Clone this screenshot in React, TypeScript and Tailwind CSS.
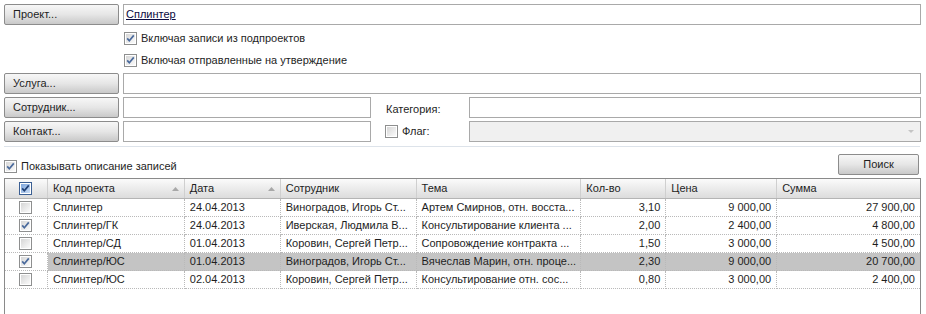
import React from "react";

const font = { fontFamily: '"Liberation Sans", Arial, sans-serif' };

function Check({ checked, head }: { checked?: boolean; head?: boolean }) {
  return (
    <svg width="13" height="13" viewBox="0 0 13 13" className="shrink-0">
      <defs>
        <linearGradient id="cbg" x1="0" y1="0" x2="1" y2="1">
          <stop offset="0" stopColor="#d6d6d6" />
          <stop offset="1" stopColor="#fbfbfb" />
        </linearGradient>
        <linearGradient id="cbh" x1="0" y1="0" x2="1" y2="1">
          <stop offset="0" stopColor="#7ea6dc" />
          <stop offset="1" stopColor="#c9dcf5" />
        </linearGradient>
      </defs>
      <rect x="0.5" y="0.5" width="12" height="12" fill="#fff" stroke={head ? "#3b5f93" : "#8e8f8f"} />
      <rect x="2" y="2" width="9" height="9" fill={head ? "url(#cbh)" : "url(#cbg)"} />
      {checked && (
        <path d="M3.2 6.4 L5.3 8.8 L9.8 3.4" fill="none" stroke={head ? "#1f3f73" : "#4a6a9c"} strokeWidth="1.7" />
      )}
    </svg>
  );
}

function Btn({ label, w = "w-[115px]", center }: { label: string; w?: string; center?: boolean }) {
  return (
    <div
      className={`${w} h-[21px] shrink-0 border border-[#8c8c8c] rounded-[2px] bg-gradient-to-b from-[#f7f7f7] via-[#e6e6e6] to-[#c9c9c9] flex items-center text-[11px] text-[#1e1e1e] ${
        center ? "justify-center" : "pl-[8px]"
      }`}
    >
      {label}
    </div>
  );
}

function Input({ w, children, disabled }: { w: string; children?: React.ReactNode; disabled?: boolean }) {
  return (
    <div
      className={`${w} h-[21px] border border-[#a9a9a9] flex items-center px-[2px] text-[11px] ${
        disabled ? "bg-[#f0f0f0] justify-end" : "bg-white"
      }`}
    >
      {children}
    </div>
  );
}

const cols = [43, 137, 96, 136, 165, 85, 111, 143];

const rows = [
  ["Сплинтер", "24.04.2013", "Виноградов, Игорь Ст...", "Артем Смирнов, отн. восста...", "3,10", "9 000,00", "27 900,00", false, false],
  ["Сплинтер/ГК", "24.04.2013", "Иверская, Людмила В...", "Консультирование клиента ...", "2,00", "2 400,00", "4 800,00", true, false],
  ["Сплинтер/СД", "01.04.2013", "Коровин, Сергей Петр...", "Сопровождение контракта  ...", "1,50", "3 000,00", "4 500,00", false, false],
  ["Сплинтер/ЮС", "01.04.2013", "Виноградов, Игорь Ст...", "Вячеслав Марин, отн. проце...", "2,30", "9 000,00", "20 700,00", true, true],
  ["Сплинтер/ЮС", "02.04.2013", "Коровин, Сергей Петр...", "Консультирование отн. сос...", "0,80", "3 000,00", "2 400,00", false, false],
] as const;

function SortArrow() {
  return (
    <svg width="7" height="4" viewBox="0 0 7 4" className="ml-auto mr-[5px]">
      <path d="M0 4 L3.5 0 L7 4 Z" fill="#a8a8a8" />
    </svg>
  );
}

export default function App() {
  const heads = ["Код проекта", "Дата", "Сотрудник", "Тема", "Кол-во", "Цена", "Сумма"];
  return (
    <div style={font} className="w-[926px] h-[314px] bg-white overflow-hidden text-[11px] text-[#1e1e1e] pl-[4px] pt-[4px]">
      <div className="flex gap-[4px]">
        <Btn label="Проект..." />
        <Input w="w-[798px]">
          <span className="underline text-[#0a0a40]">Сплинтер</span>
        </Input>
      </div>
      <div className="pl-[120px] mt-[7px] flex items-center gap-[4px] h-[13px]">
        <Check checked /> <span>Включая записи из подпроектов</span>
      </div>
      <div className="pl-[120px] mt-[9px] flex items-center gap-[4px] h-[13px]">
        <Check checked /> <span>Включая отправленные на утверждение</span>
      </div>
      <div className="flex gap-[4px] mt-[6px]">
        <Btn label="Услуга..." />
        <Input w="w-[798px]" />
      </div>
      <div className="flex gap-[4px] mt-[3px] items-center">
        <Btn label="Сотрудник..." />
        <Input w="w-[248px]" />
        <div className="w-[90px] pl-[11px] pt-[3px]">Категория:</div>
        <Input w="w-[452px]" />
      </div>
      <div className="flex gap-[4px] mt-[3px] items-center">
        <Btn label="Контакт..." />
        <Input w="w-[248px]" />
        <div className="w-[90px] pl-[10px] flex items-center gap-[4px]">
          <Check /> <span>Флаг:</span>
        </div>
        <Input w="w-[452px]" disabled>
          <svg width="6" height="4" viewBox="0 0 6 4" className="mr-[4px]">
            <path d="M0 0 L6 0 L3 3 Z" fill="#c4c4c4" />
          </svg>
        </Input>
      </div>
      <div className="mt-[4px] mr-[6px] h-[1px] bg-[#dde3ea]" />
      <div className="flex items-center mt-[7px] pr-[7px]">
        <div className="flex items-center gap-[4px] pt-[4px]">
          <Check checked /> <span>Показывать описание записей</span>
        </div>
        <div className="ml-auto">
          <Btn label="Поиск" w="w-[81px]" center />
        </div>
      </div>
      <div className="mt-[3px] w-[917px] h-[160px] border border-[#8a8a8a] bg-white">
        <div className="flex h-[20px] bg-gradient-to-b from-[#fbfbfb] to-[#dcdcdc] border-b border-[#b4b4b4]">
          <div style={{ width: cols[0] }} className="flex items-center justify-center border-r border-[#cfcfcf]">
            <Check checked head />
          </div>
          {heads.map((h, i) => (
            <div
              key={h}
              style={{ width: cols[i + 1] }}
              className={`flex items-center pl-[5px] ${i < 6 ? "border-r border-[#cfcfcf]" : ""}`}
            >
              {h}
              {i < 2 && <SortArrow />}
            </div>
          ))}
        </div>
        {rows.map((r, ri) => (
          <div key={ri} className="flex h-[18px]">
            <div
              style={{ width: cols[0] }}
              className="flex items-center justify-center border-r border-b border-dotted border-[#b9b9b9]"
            >
              <Check checked={r[7]} />
            </div>
            {r.slice(0, 7).map((c, ci) => (
              <div
                key={ci}
                style={{ width: cols[ci + 1] }}
                className={`flex items-center px-[5px] whitespace-nowrap overflow-hidden border-b border-dotted border-[#b9b9b9] ${
                  ci < 6 ? "border-r" : ""
                } ${ci >= 4 ? "justify-end" : ""} ${r[8] ? "bg-[#c4c4c4]" : ""}`}
              >
                {c as string}
              </div>
            ))}
          </div>
        ))}
      </div>
    </div>
  );
}
